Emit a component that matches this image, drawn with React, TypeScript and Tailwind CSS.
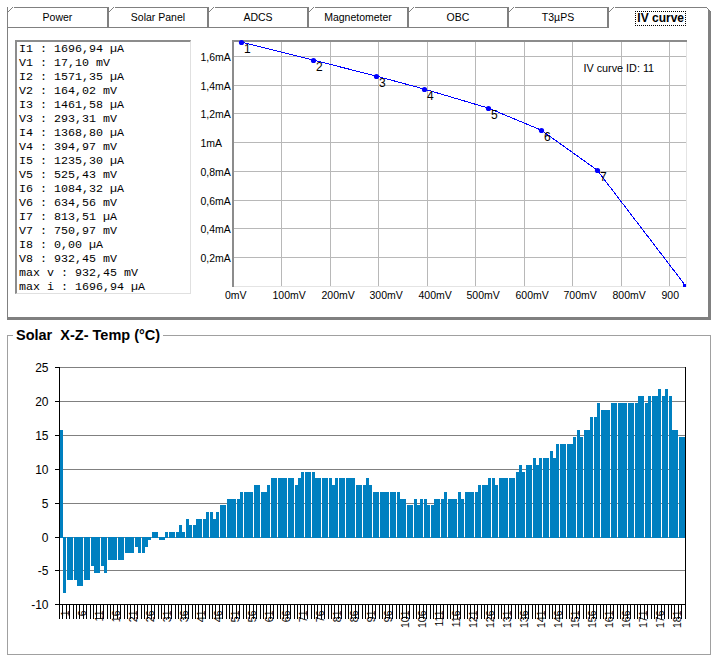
import React from "react";

const tabs = ["Power", "Solar Panel", "ADCS", "Magnetometer", "OBC", "T3µPS"];

const lines = [
  "I1 : 1696,94 µA", "V1 : 17,10 mV", "I2 : 1571,35 µA", "V2 : 164,02 mV",
  "I3 : 1461,58 µA", "V3 : 293,31 mV", "I4 : 1368,80 µA", "V4 : 394,97 mV",
  "I5 : 1235,30 µA", "V5 : 525,43 mV", "I6 : 1084,32 µA", "V6 : 634,56 mV",
  "I7 : 813,51 µA", "V7 : 750,97 mV", "I8 : 0,00 µA", "V8 : 932,45 mV",
  "max v : 932,45 mV", "max i : 1696,94 µA",
];

const temps = [
  15.8,-8.2,-6.3,-6.3,-6.3,-7.2,-7.2,-6.3,-6.3,-4.2,-5.3,-5.3,-4.2,-5.3,-3.4,-3.4,-3.4,-3.4,-3.4,-2.4,
  -2.4,-2.4,-1.4,-2.4,-2.4,-1.4,-0.5,0.8,0.8,-0.5,-0.5,0.8,0.8,0.8,0.8,1.7,0.8,2.7,1.7,1.7,
  2.7,2.7,2.7,3.7,3.7,2.7,3.7,4.7,4.7,5.6,5.6,5.6,5.6,6.6,6.6,6.6,6.6,7.6,7.6,6.6,
  6.6,7.6,8.7,8.7,8.7,8.7,8.7,8.7,8.7,7.6,8.7,9.6,9.6,9.6,9.6,8.7,8.7,8.7,8.7,8.7,
  7.6,8.7,8.7,8.7,8.7,8.7,8.7,7.6,7.6,7.6,8.7,7.6,6.6,6.6,6.6,6.6,6.6,6.6,6.6,6.6,
  5.6,5.6,4.7,4.7,5.6,4.7,5.6,5.6,4.7,4.7,5.6,5.6,5.6,6.6,5.6,5.6,5.6,6.6,5.6,6.6,
  6.6,6.6,6.6,7.6,7.6,7.6,8.7,8.7,7.6,8.7,8.7,8.7,8.7,8.7,9.6,10.6,9.6,10.6,10.6,11.6,
  10.6,11.6,11.6,11.6,12.6,11.6,13.7,13.7,13.7,13.7,13.7,14.7,15.7,14.7,15.7,15.7,17.7,17.7,19.7,18.7,
  18.7,18.7,19.7,19.7,19.7,19.7,19.7,19.7,19.7,19.7,20.8,20.8,19.7,20.8,20.8,20.8,21.8,20.8,21.8,20.8,
  15.7,15.7,14.7,14.7,
];

const ivPoints: [number, number][] = [
  [241, 42], [313, 60], [376, 76], [424, 89], [488, 108], [541, 130], [597, 170], [685, 285],
];
const ivGridX = [281, 330, 378, 427, 475, 524, 572, 621, 669];
const ivGridY = [56, 85, 113, 142, 171, 200, 228, 257];
const ivYLabels = ["1,6mA", "1,4mA", "1,2mA", "1mA", "0,8mA", "0,6mA", "0,4mA", "0,2mA"];
const ivXLabels = ["100mV", "200mV", "300mV", "400mV", "500mV", "600mV", "700mV", "800mV", "900"];

const yTicks: [number, string][] = [
  [367, "25"], [401, "20"], [435, "15"], [469, "10"], [503, "5"], [537, "0"], [570, "-5"], [604, "-10"],
];

function Corner({ right }: { right?: boolean }) {
  return (
    <svg
      width="6"
      height="6"
      viewBox="0 0 6 6"
      shapeRendering="crispEdges"
      className={right ? "absolute -top-px -right-[3px]" : "absolute -top-px left-0"}
    >
      {right ? (
        <>
          <polygon points="0,0 6,0 6,6" fill="#fff" />
          <line x1="1" y1="0" x2="6" y2="5" stroke="#808080" />
        </>
      ) : (
        <>
          <polygon points="0,0 6,0 0,6" fill="#fff" />
          <line x1="5" y1="0" x2="0" y2="5" stroke="#808080" />
        </>
      )}
    </svg>
  );
}

function TabStrip() {
  return (
    <div className="flex h-[21px] text-[10.5px] text-black">
      {tabs.map((t, i) => (
        <div
          key={t}
          className={
            i === 0
              ? "relative flex w-[102px] items-center justify-center border-t border-l border-b border-r-2 border-[#808080] pt-px"
              : "relative flex w-[100px] items-center justify-center border-t border-b border-r-2 border-[#808080] pt-px"
          }
        >
          <Corner />
          {t}
        </div>
      ))}
      <div className="relative flex w-[102px] items-start justify-end border-t border-r-[3px] border-[#808080] pr-[22px] pt-[3px]">
        <Corner />
        <Corner right />
        <span className="border border-dotted border-black px-px text-[12px] leading-[13px] font-bold">IV curve</span>
      </div>
    </div>
  );
}

function IvChart() {
  return (
    <svg width="517" height="280" viewBox="191 33 517 280" className="block">
      <path
        d={
          ivGridX.map((x) => `M${x + 0.5} 40V287`).join("") +
          ivGridY.map((y) => `M232 ${y + 0.5}H686`).join("")
        }
        stroke="#b8b8b8"
        strokeWidth="1"
        fill="none"
        shapeRendering="crispEdges"
      />
      <g shapeRendering="crispEdges">
        <rect x="686" y="40" width="1" height="247" fill="#e4e4e4" />
        <rect x="232" y="286" width="455" height="1" fill="#e4e4e4" />
        <rect x="232" y="40" width="455" height="2" fill="#8c8c8c" />
        <rect x="232" y="40" width="2" height="247" fill="#8c8c8c" />
        <polyline
          points={ivPoints.map((p) => p.join(",")).join(" ")}
          fill="none"
          stroke="#0000ff"
        />
        <rect x="683" y="284" width="3" height="3" fill="#0000ff" />
      </g>
      {ivPoints.slice(0, 7).map((p, i) => (
        <g key={i}>
          <circle cx={p[0] + 0.5} cy={p[1] + 0.5} r="2.6" fill="#0000ff" />
          <text x={p[0] + 3} y={p[1] + 11} fontSize="12" fill="#000">
            {i + 1}
          </text>
        </g>
      ))}
      {ivYLabels.map((l, i) => (
        <text key={l} x="200.5" y={ivGridY[i] + 5} fontSize="10.5" fill="#000">
          {l}
        </text>
      ))}
      <text x="225" y="299" fontSize="10.5" fill="#000">0mV</text>
      {ivXLabels.map((l, i) => (
        <text key={l} x={i === 8 ? 661.5 : ivGridX[i] - 8.5} y="299" fontSize="10.5" fill="#000">
          {l}
        </text>
      ))}
      <text x="583.5" y="72" fontSize="10.8" fill="#000">IV curve ID: 11</text>
    </svg>
  );
}

function TempChart() {
  const toY = (v: number) => Math.round(537 - v * 6.79);
  const barX = (i: number) => Math.round(60 + 3.4 * i);
  const labels: number[] = [];
  for (let i = 1; i < 184; i += 5) labels.push(i);
  const ticks: number[] = [];
  for (let i = 0; i <= 184; i++) ticks.push(59 + Math.round(3.4 * i));
  return (
    <svg width="702" height="318" viewBox="8 336 702 318" className="block">
      <g shapeRendering="crispEdges">
        {yTicks.map(([y]) => (
          <line key={y} x1="55" y1={y + 0.5} x2="60" y2={y + 0.5} stroke="#000" />
        ))}
        {yTicks
          .filter(([y]) => y !== 604)
          .map(([y]) => (
            <line key={y} x1="60" y1={y + 0.5} x2="685" y2={y + 0.5} stroke="#808080" />
          ))}
        {temps.map((v, i) =>
          v >= 0 ? (
            <rect key={i} x={barX(i)} y={toY(v)} width="3" height={537 - toY(v) + 1} fill="#0080c0" />
          ) : (
            <rect key={i} x={barX(i)} y="537" width="3" height={toY(v) - 537} fill="#0080c0" />
          )
        )}
        <rect x="59" y="367" width="1" height="238" fill="#000" />
        <rect x="685" y="367" width="1" height="238" fill="#000" />
        <rect x="55" y="604" width="631" height="1" fill="#000" />
        {ticks.map((x, i) => (
          <line key={i} x1={x + 0.5} y1="604" x2={x + 0.5} y2="619" stroke="#000" />
        ))}
      </g>
      {yTicks.map(([y, l]) => (
        <text key={y} x="48.5" y={y + 4.5} fontSize="12" textAnchor="end" fill="#000">
          {l}
        </text>
      ))}
      {labels.map((n) => {
        const x = 60 + 3.4 * n + 1.5 + 4;
        return (
          <text
            key={n}
            transform={`translate(${x} 610.5) rotate(-90)`}
            fontSize="10.5"
            textAnchor="end"
            fill="#000"
          >
            {n}
          </text>
        );
      })}
    </svg>
  );
}

export default function App() {
  return (
    <div className="h-[658px] w-[716px] overflow-hidden bg-white pt-[7px] pl-[7px] font-['Liberation_Sans',Arial,sans-serif] text-black">
      <TabStrip />
      <div className="flex h-[292px] w-[704px] items-start border-b-[3px] border-l border-r-[3px] border-[#808080] pt-[5px] pl-[7px]">
        <div className="mt-[7px] h-[254px] w-[176px] border-t-2 border-l-2 border-r border-b border-t-[#8c8c8c] border-l-[#8c8c8c] border-r-[#e0e0e0] border-b-[#e0e0e0] pl-[2px] font-['Liberation_Mono','Courier_New',monospace] text-[11.67px] leading-[14px]">
          {lines.map((l) => (
            <div key={l} className="h-[14px] whitespace-pre">
              {l}
            </div>
          ))}
        </div>
        <IvChart />
      </div>
      <div className="relative mt-[15px] h-[320px] w-[704px] border border-[#a0a0a0]">
        <span className="absolute -top-[9px] left-[5px] bg-white px-[3px] text-[14.5px] leading-[16px] font-bold whitespace-pre">
          Solar  X-Z- Temp (°C)
        </span>
        <TempChart />
      </div>
    </div>
  );
}
